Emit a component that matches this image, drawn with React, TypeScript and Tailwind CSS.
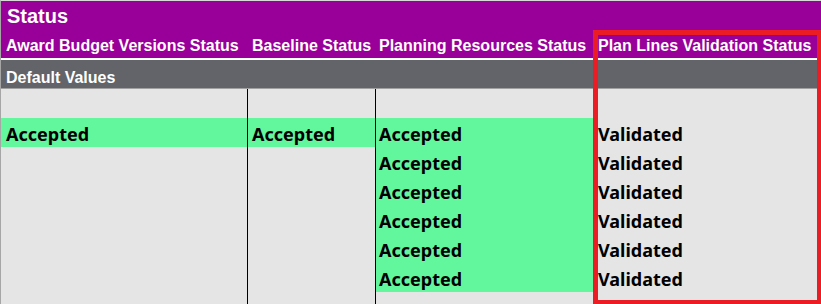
const headerFont = { fontFamily: '"Liberation Sans", Arial, sans-serif' }
const cellFont = { fontFamily: '"Noto Sans", "Open Sans", sans-serif' }

const rows = [
  { award: '', baseline: '', planning: '', lines: '' },
  { award: 'Accepted', baseline: 'Accepted', planning: 'Accepted', lines: 'Validated' },
  { award: '', baseline: '', planning: 'Accepted', lines: 'Validated' },
  { award: '', baseline: '', planning: 'Accepted', lines: 'Validated' },
  { award: '', baseline: '', planning: 'Accepted', lines: 'Validated' },
  { award: '', baseline: '', planning: 'Accepted', lines: 'Validated' },
  { award: '', baseline: '', planning: 'Accepted', lines: 'Validated' },
]

function Cell({ text, className }: { text: string; className: string }) {
  return (
    <div className={`flex items-center h-[29px] pt-[3px] text-[18px] font-bold text-black ${text ? 'bg-[#62f79c]' : ''} ${className}`}>
      {text}
    </div>
  )
}

export default function App() {
  return (
    <div className="relative w-[821px] h-[304px] overflow-hidden bg-[#e5e5e5] border-l border-[#a6a6a6] border-t border-t-[#d9d9d9]">
      {/* title */}
      <div className="h-[28px] bg-[#990099] text-white font-bold text-[20px] leading-none flex items-center pl-[6px] pt-[1px]" style={headerFont}>
        Status
      </div>

      {/* column headers */}
      <div className="grid grid-cols-[247px_128px_217px_1fr] h-[29px] bg-[#990099] text-white font-bold text-[16px] items-center" style={headerFont}>
        <div className="pl-[5px] pt-[4px]">Award Budget Versions Status</div>
        <div className="pl-[4px] pt-[4px]">Baseline Status</div>
        <div className="pl-[3px] pt-[4px]">Planning Resources Status</div>
        <div className="pl-[5px] pt-[4px]">Plan Lines Validation Status</div>
      </div>
      <div className="h-[2px] bg-white" />

      {/* default values */}
      <div className="h-[29px] bg-[#626469] border-b border-[#a0a0a0] text-white font-bold text-[16px] flex items-center pl-[5px] pt-[8px]" style={headerFont}>
        Default Values
      </div>

      {/* data */}
      <div style={cellFont}>
        {rows.map((r, i) => (
          <div key={i} className="grid grid-cols-[247px_128px_217px_1fr]">
            <Cell text={r.award} className="border-r border-black pl-[5px]" />
            <Cell text={r.baseline} className="border-r border-black pl-[4px]" />
            <Cell text={r.planning} className="pl-[3px]" />
            <div className="flex items-center h-[29px] pt-[3px] text-[18px] font-bold text-black pl-[5px]">{r.lines}</div>
          </div>
        ))}
        <div className="grid grid-cols-[247px_128px_217px_1fr] h-[12px]">
          <div className="border-r border-black" />
          <div className="border-r border-black" />
          <div />
          <div />
        </div>
      </div>

      {/* highlight box */}
      <div className="absolute left-[592px] top-[29px] w-[229px] h-[275px] border-[5px] border-[#ec1c24]" />
    </div>
  )
}
